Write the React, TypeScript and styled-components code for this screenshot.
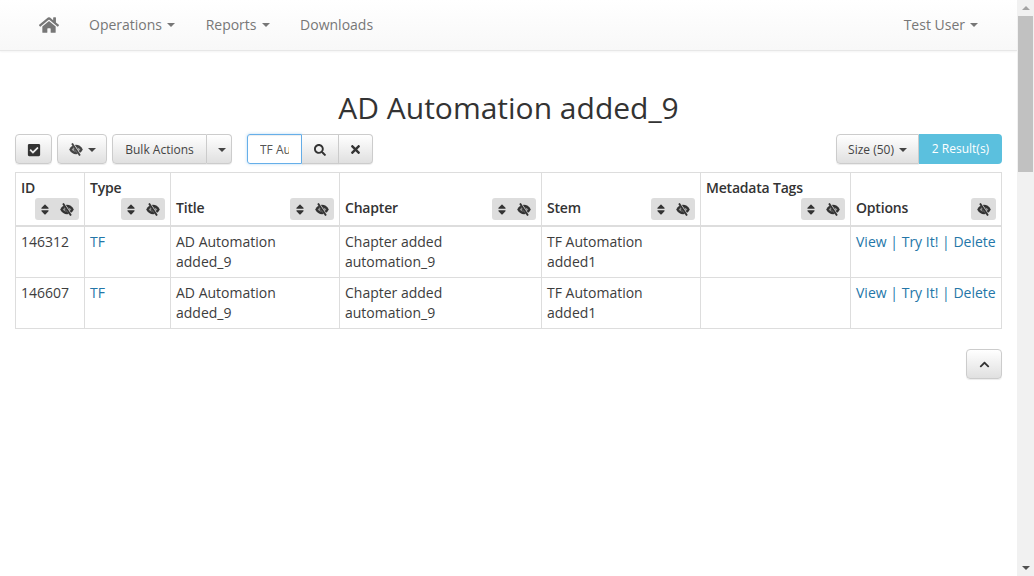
import React from "react";
import styled, { createGlobalStyle } from "styled-components";
import { FaHome, FaCheckSquare, FaSearch, FaTimes, FaSort, FaChevronUp } from "react-icons/fa";

const Global = createGlobalStyle`
  html, body { margin: 0; padding: 0; height: 100%; overflow: hidden; background: #fff; }
  body { font-family: "Open Sans", "Liberation Sans", sans-serif; font-size: 14px; line-height: 20px; color: #3d3d3d; }
`;

const Shell = styled.div`
  display: flex;
  width: 1034px;
  height: 576px;
  overflow: hidden;
`;
const Page = styled.div`
  width: 1017px;
  flex: none;
`;
const Navbar = styled.nav`
  height: 50px;
  display: flex;
  align-items: center;
  padding: 0 39px;
  background: linear-gradient(to bottom, #fff 0%, #f8f8f8 100%);
  border-bottom: 1px solid #e7e7e7;
  box-shadow: 0 1px 2px rgba(0, 0, 0, 0.05);
  color: #777;
`;
const HomeLink = styled.span`
  display: flex;
  width: 20px;
  margin-right: 30px;
  font-size: 20px;
  color: #777;
`;
const NavItem = styled.span<{ $end?: boolean }>`
  display: inline-flex;
  align-items: center;
  margin-right: ${(p) => (p.$end ? "0" : "30.6px")};
  margin-left: ${(p) => (p.$end ? "auto" : "0")};
`;
const Caret = styled.i`
  display: inline-block;
  width: 0;
  height: 0;
  margin-left: 5px;
  border-top: 4px solid currentColor;
  border-left: 4px solid transparent;
  border-right: 4px solid transparent;
`;
const Title = styled.h1`
  margin: 40px 0 9px;
  height: 34px;
  font-size: 30px;
  line-height: 33px;
  font-weight: 400;
  text-align: center;
  color: #333;
`;
const Content = styled.div`
  padding: 0 15px;
`;
const Toolbar = styled.div`
  display: flex;
  align-items: center;
  height: 30px;
`;
const Btn = styled.button<{ $w: number; $ml?: number; $joinL?: boolean; $joinR?: boolean }>`
  box-sizing: border-box;
  display: inline-flex;
  align-items: center;
  justify-content: center;
  width: ${(p) => p.$w}px;
  height: 30px;
  margin: 0 0 0 ${(p) => p.$ml || 0}px;
  padding: 1px 0 0;
  border: 1px solid #ccc;
  border-left-width: ${(p) => (p.$joinL ? 0 : 1)}px;
  border-radius: ${(p) => (p.$joinL ? "0" : "4px")} ${(p) => (p.$joinR ? "0" : "4px")} ${(p) => (p.$joinR ? "0" : "4px")} ${(p) => (p.$joinL ? "0" : "4px")};
  background: linear-gradient(to bottom, #fff 0%, #e0e0e0 100%);
  box-shadow: inset 0 1px 0 rgba(255, 255, 255, 0.15), 0 1px 1px rgba(0, 0, 0, 0.075);
  font-family: inherit;
  font-size: 12px;
  line-height: 18px;
  color: #444;
`;
const SearchInput = styled.div`
  box-sizing: border-box;
  width: 55px;
  height: 30px;
  margin-left: 15px;
  padding: 0 12px;
  border: 1px solid #66afe9;
  border-radius: 3px 0 0 3px;
  box-shadow: inset 0 1px 1px rgba(0, 0, 0, 0.075), 0 0 3px rgba(102, 175, 233, 0.5);
  font-size: 12px;
  line-height: 28px;
  color: #555;
`;
const SearchValue = styled.span`
  display: block;
  padding-top: 1px;
  overflow: hidden;
  white-space: nowrap;
`;
const Spacer = styled.div`
  flex: 1;
`;
const ResultBadge = styled.span`
  box-sizing: border-box;
  width: 83px;
  height: 30px;
  border-radius: 0 4px 4px 0;
  background: #5bc0de;
  color: #fff;
  font-size: 12px;
  line-height: 30px;
  text-align: center;
`;
const Table = styled.table`
  width: 987px;
  margin-top: 8px;
  border-collapse: collapse;
  table-layout: fixed;
`;
const Th = styled.th`
  padding: 5px;
  border: 1px solid #ddd;
  border-bottom-width: 2px;
  vertical-align: bottom;
  text-align: left;
  font-weight: 600;
  letter-spacing: -0.2px;
  color: #333;
`;
const Td = styled.td`
  padding: 5px;
  border: 1px solid #ddd;
  vertical-align: top;
`;
const HeadInner = styled.div<{ $stacked?: boolean }>`
  display: flex;
  flex-direction: ${(p) => (p.$stacked ? "column" : "row")};
  justify-content: space-between;
  align-items: ${(p) => (p.$stacked ? "stretch" : "flex-end")};
  min-height: 42px;
`;
const HeadLabel = styled.span<{ $stacked?: boolean }>`
  display: block;
  line-height: 20px;
  margin-bottom: ${(p) => (p.$stacked ? 0 : 2)}px;
`;
const ControlGroup = styled.span<{ $single?: boolean }>`
  display: flex;
  align-items: center;
  justify-content: space-between;
  align-self: flex-end;
  box-sizing: border-box;
  width: ${(p) => (p.$single ? 25 : 44)}px;
  height: 22px;
  padding: 0 ${(p) => (p.$single ? 6 : 5)}px;
  border-radius: 3px;
  background: #ddd;
  color: #333;
  font-size: 12px;
`;
const SortIcon = styled(FaSort)`
  width: 10px;
  height: 13px;
`;
const EyeSvg = styled.svg`
  display: block;
  flex: none;
  width: 14px;
  height: 13px;
`;
const Link = styled.span`
  color: #2476a8;
`;
const OptionLinks = styled.div`
  white-space: nowrap;
`;
const Sep = styled.span`
  color: #2476a8;
  margin: 0 3.7px;
`;
const BackRow = styled.div`
  display: flex;
  justify-content: flex-end;
  margin-top: 20px;
`;
const Scrollbar = styled.div`
  width: 17px;
  flex: none;
  height: 576px;
  background: #f1f1f1;
  display: flex;
  flex-direction: column;
  align-items: center;
`;
const Arrow = styled.i<{ $down?: boolean }>`
  display: block;
  width: 0;
  height: 0;
  margin: ${(p) => (p.$down ? "0" : "6px 0 6px")};
  border-left: 4px solid transparent;
  border-right: 4px solid transparent;
  ${(p) => (p.$down ? "border-top: 4px solid #505050;" : "border-bottom: 4px solid #a3a3a3;")}
`;
const Thumb = styled.div`
  width: 15px;
  height: 156px;
  margin-left: 1px;
  align-self: flex-start;
  background: #c1c1c1;
`;
const TrackFill = styled.div`
  flex: 1;
`;
const ArrowBottom = styled.div`
  height: 17px;
  display: flex;
  align-items: center;
`;

function HideIcon({ bg }: { bg: string }) {
  return (
    <EyeSvg viewBox="0 0 14 13" aria-hidden="true">
      <path d="M0.2 6.5C2 3.2 4.3 1.8 7 1.8s5 1.4 6.8 4.7C12 9.8 9.7 11.2 7 11.2S2 9.8 0.2 6.5z" fill="currentColor" />
      <path d="M2.6 6.5C3.6 5.2 5.1 4.4 7 4.4s3.4.8 4.4 2.1C10.4 7.8 8.9 8.6 7 8.6S3.6 7.8 2.6 6.5z" fill={bg} opacity="0.55" />
      <circle cx="7" cy="6.5" r="2" fill="currentColor" />
      <path d="M3.6 0.6L11.2 12.4" stroke={bg} strokeWidth="2.4" fill="none" />
      <path d="M3 0.4L11 12.6" stroke="currentColor" strokeWidth="1.8" fill="none" />
    </EyeSvg>
  );
}

const columns = [
  { name: "ID", w: 69, stacked: true },
  { name: "Type", w: 86, stacked: true },
  { name: "Title", w: 169 },
  { name: "Chapter", w: 202 },
  { name: "Stem", w: 159 },
  { name: "Metadata Tags", w: 150, stacked: true },
  { name: "Options", w: 151, single: true },
];
const rows = ["146312", "146607"];

export default function App() {
  return (
    <Shell>
      <Global />
      <Page>
        <Navbar>
          <HomeLink><FaHome /></HomeLink>
          <NavItem>Operations<Caret /></NavItem>
          <NavItem>Reports<Caret /></NavItem>
          <NavItem>Downloads</NavItem>
          <NavItem $end>Test User<Caret /></NavItem>
        </Navbar>
        <Title>AD Automation added_9</Title>
        <Content>
          <Toolbar>
            <Btn $w={37}><FaCheckSquare size={14} color="#333" /></Btn>
            <Btn $w={50} $ml={5}><HideIcon bg="#f0f0f0" /><Caret /></Btn>
            <Btn $w={95} $ml={5} $joinR>Bulk Actions</Btn>
            <Btn $w={25} $joinL><Caret /></Btn>
            <SearchInput><SearchValue>TF Automation</SearchValue></SearchInput>
            <Btn $w={37} $joinL $joinR><FaSearch size={12} color="#333" /></Btn>
            <Btn $w={34} $joinL><FaTimes size={13} color="#333" /></Btn>
            <Spacer />
            <Btn $w={83} $joinR>Size (50)<Caret /></Btn>
            <ResultBadge>2 Result(s)</ResultBadge>
          </Toolbar>
          <Table>
            <colgroup>
              {columns.map((c) => <col key={c.name} width={c.w} />)}
            </colgroup>
            <thead>
              <tr>
                {columns.map((c) => (
                  <Th key={c.name}>
                    <HeadInner $stacked={c.stacked}>
                      <HeadLabel $stacked={c.stacked}>{c.name}</HeadLabel>
                      <ControlGroup $single={c.single}>
                        {!c.single && <SortIcon />}
                        <HideIcon bg="#ddd" />
                      </ControlGroup>
                    </HeadInner>
                  </Th>
                ))}
              </tr>
            </thead>
            <tbody>
              {rows.map((id) => (
                <tr key={id}>
                  <Td>{id}</Td>
                  <Td><Link>TF</Link></Td>
                  <Td>AD Automation added_9</Td>
                  <Td>Chapter added automation_9</Td>
                  <Td>TF Automation added1</Td>
                  <Td />
                  <Td>
                    <OptionLinks><Link>View</Link><Sep>|</Sep><Link>Try It!</Link><Sep>|</Sep><Link>Delete</Link></OptionLinks>
                  </Td>
                </tr>
              ))}
            </tbody>
          </Table>
          <BackRow>
            <Btn $w={36}><FaChevronUp size={11} color="#333" /></Btn>
          </BackRow>
        </Content>
      </Page>
      <Scrollbar>
        <Arrow />
        <Thumb />
        <TrackFill />
        <ArrowBottom><Arrow $down /></ArrowBottom>
      </Scrollbar>
    </Shell>
  );
}
